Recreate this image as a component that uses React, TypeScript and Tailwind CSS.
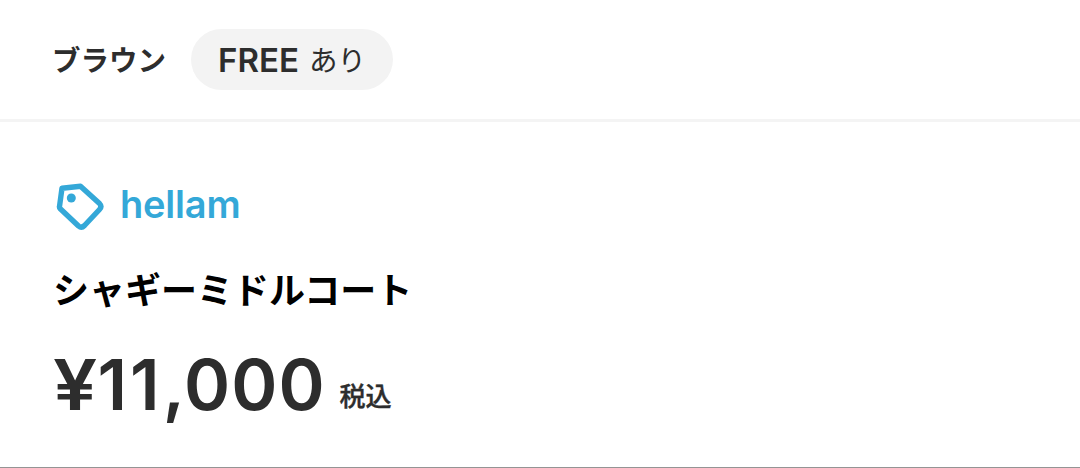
export default function App() {
  return (
    <div className="flex h-[468px] flex-col overflow-hidden border-b border-[#949494] bg-white font-['Inter','Noto_Sans_CJK_JP',sans-serif] text-[#2d2d2d]">
      <div className="flex h-[122px] shrink-0 items-center border-b-3 border-[#f4f4f4] pl-[52px]">
        <span className="w-[139px] pt-[3px] text-[28.5px] leading-none font-bold whitespace-nowrap">ブラウン</span>
        <div className="flex h-[61px] w-[202px] items-center gap-[10px] rounded-full bg-[#f3f3f3] pl-[27px] whitespace-nowrap">
          <span className="pt-0.5 text-[33px] leading-none font-semibold">FREE</span>
          <span className="pt-[3px] text-[28.5px] leading-none">あり</span>
        </div>
      </div>

      <main className="flex flex-col pl-[53px]">
        <a className="mt-[58px] flex h-[52px] items-center text-[#34a8d8]">
          <svg width="52" height="52" viewBox="0 0 52 52" fill="none" stroke="currentColor" strokeWidth="5.4" strokeLinejoin="round">
            <path d="M9 8.2 27.5 6.2 46.5 23.5 Q49.3 26.5 46.5 29.5 L31.5 45.5 Q28.5 48.5 25.5 46 L7 28.5 Q6.3 27.7 6.5 26.5 Z" />
            <circle cx="18.3" cy="18" r="4.5" fill="currentColor" stroke="none" />
          </svg>
          <span className="ml-[15px] pb-1 text-[38px] leading-none font-semibold tracking-[-0.2px]">hellam</span>
        </a>
        <h1 className="mt-[37px] text-[36px] leading-[44px] font-bold text-black">シャギーミドルコート</h1>
        <div className="mt-[34px] flex items-baseline leading-[76px]">
          <span className="text-[70px] font-semibold">
            <span className="mr-[5px] inline-block origin-left scale-x-[1.12]">¥</span>
            <span className="tracking-[3px]">11</span>
            <span className="tracking-[1px]">,000</span>
          </span>
          <span className="ml-[14px] pb-1 text-[26px] leading-none font-semibold">
            <span className="inline-block -translate-y-[4px] text-[26px] font-medium [-webkit-text-stroke:0.4px_currentColor]">税込</span>
          </span>
        </div>
      </main>
    </div>
  )
}
